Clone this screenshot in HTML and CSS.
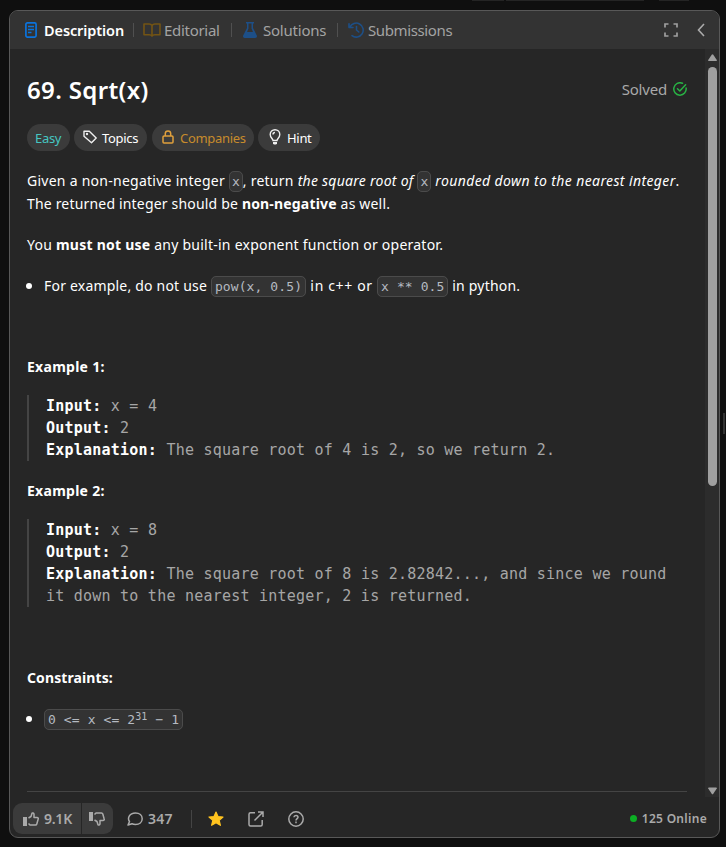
FILE: index.html
```html
<!DOCTYPE html>
<html lang="en">
<head>
<meta charset="utf-8">
<title>69. Sqrt(x)</title>
<link rel="stylesheet" href="styles.css">
</head>
<body>
<div class="top-edge"><i></i><i></i><i></i></div>
<div class="side-handle"></div>
<main class="panel">
  <header class="tabs">
    <div class="tab active">
      <svg class="doc" width="12" height="16" viewBox="0 0 12 16" fill="none" stroke="#0b73dc" stroke-width="1.700"><rect x=".9" y=".9" width="10.200" height="14.200" rx="1.500"/><path d="M3 4.500h6M3 7.500h6M3 10.500h3.500" stroke-width="1.300"/></svg>
      <span class="t-desc">Description</span>
    </div>
    <b class="sep s1"></b>
    <div class="tab">
      <svg class="book" width="18" height="14" viewBox="0 0 18 14" fill="none" stroke="#735414" stroke-width="1.600" stroke-linejoin="round"><path d="M9 2.500C8.300 1.500 7.400 1 6 1H1v10.700h5.200c1.400 0 2.300.4 2.800 1.300.5-.9 1.400-1.300 2.800-1.300H17V1h-5c-1.400 0-2.300.5-3 1.500zM9 2.500V13"/></svg>
      <span class="t-edit">Editorial</span>
    </div>
    <b class="sep s2"></b>
    <div class="tab">
      <svg class="flask" width="14" height="16" viewBox="0 0 14 16"><path d="M3 0h8v1.500h-1V6l3.700 7.200c.7 1.400 0 2.800-1.500 2.800H1.800C.3 16-.4 14.600.3 13.200L4 6V1.500H3z" fill="#1d4f87"/><path d="M5.500 1.500h3v5L10 10H4l1.500-3.500z" fill="#333"/></svg>
      <span class="t-sol">Solutions</span>
    </div>
    <b class="sep s3"></b>
    <div class="tab">
      <svg class="history" width="16" height="16" viewBox="0 0 16 16" fill="none" stroke="#1d4f87" stroke-width="1.600" stroke-linecap="round" stroke-linejoin="round"><path d="M1.800 5.200A7 7 0 1 1 4 13.700M1 1.800v3.700h4M8.500 4.500V8l2.300 2"/></svg>
      <span class="t-sub">Submissions</span>
    </div>
    <svg class="expand" width="14" height="14" viewBox="0 0 14 14" fill="none" stroke="#a0a0a0" stroke-width="1.700"><path d="M1 4.500V1h3.500M9.500 1H13v3.500M13 9.500V13H9.500M4.500 13H1V9.500"/></svg>
    <svg class="chev" width="8" height="14" viewBox="0 0 8 14" fill="none" stroke="#aaa" stroke-width="1.600"><path d="M7 1 1.500 7 7 13"/></svg>
  </header>

  <div class="body">
    <article class="content">
      <div class="title-row">
        <h1>69. Sqrt(x)</h1>
        <div class="solved"><span>Solved</span><svg width="14" height="14" viewBox="0 0 14 14" fill="none" stroke="#28b244" stroke-width="1.500" stroke-linecap="round" stroke-linejoin="round"><path d="M9.500 1.300A6.200 6.200 0 1 0 13.100 6M4.500 6.800 6.800 9 12.600 2.800"/></svg></div>
      </div>
      <div class="chips">
        <span class="chip easy"><span>Easy</span></span>
        <span class="chip topics"><svg width="14" height="14" viewBox="0 0 14 14" fill="none" stroke="#eee" stroke-width="1.400" stroke-linejoin="round"><path d="M1 1.200h5.300L13.200 8 8.500 12.800 1 6.200z"/><circle cx="4" cy="4" r=".5"/></svg><span>Topics</span></span>
        <span class="chip companies"><svg width="12" height="14" viewBox="0 0 12 14" fill="none" stroke="#e0a03c" stroke-width="1.500"><rect x="1" y="6" width="10" height="7" rx="1"/><path d="M3.300 6V3.600a2.700 2.700 0 0 1 5.400 0V6"/></svg><span>Companies</span></span>
        <span class="chip hint"><svg width="12" height="16" viewBox="0 0 12 16" fill="none" stroke="#eee" stroke-width="1.400"><path d="M4 11.500c0-1.700-2.800-2.700-2.800-6a4.800 4.800 0 0 1 9.600 0c0 3.300-2.800 4.300-2.800 6zM6 3.500c-1.200 0-2 .8-2 2"/><path d="M4 13h4v1.200L7.200 15.500H4.800L4 14.200z" fill="#eee" stroke="none"/></svg><span>Hint</span></span>
      </div>

      <p class="intro"><span class="l1a">Given a non-negative integer </span><code class="x">x</code><span class="l1b">, return <em>the square root of </em></span><code class="x">x</code><em class="l1c"> rounded down to the nearest integer</em>.<br><span class="l2">The returned integer should be <strong>non-negative</strong> as well.</span></p>
      <p class="must">You <strong>must not use</strong> any built-in exponent function or operator.</p>
      <ul class="rule"><li><span>For example, do not use </span><code>pow(x, 0.5)</code><span class="cpp"> in c++ or </span><code>x ** 0.5</code><span> in python.</span></li></ul>

      <h2 class="ex1">Example 1:</h2>
      <pre><strong>Input:</strong> x = 4
<strong>Output:</strong> 2
<strong>Explanation:</strong> The square root of 4 is 2, so we return 2.</pre>
      <h2 class="ex2">Example 2:</h2>
      <pre class="second"><strong>Input:</strong> x = 8
<strong>Output:</strong> 2
<strong>Explanation:</strong> The square root of 8 is 2.82842..., and since we round
it down to the nearest integer, 2 is returned.</pre>
      <h2 class="con">Constraints:</h2>
      <ul class="limits"><li><code>0 &lt;= x &lt;= 2<sup>31</sup> − 1</code></li></ul>
      <hr>
    </article>
    <div class="scrollbar">
      <svg width="9" height="8" viewBox="0 0 9 8"><path d="M3.700.8q.8-1 1.600 0L8.800 6q.5 1-.6 1H.8Q-.3 7 .2 6z" fill="#9f9f9f"/></svg>
      <div class="thumb"></div>
      <svg class="down" width="9" height="8" viewBox="0 0 9 8"><path d="M3.700 6.700q.8 1 1.600 0L8.800 1.500q.5-1-.6-1H.8q-1.100 0-.6 1z" fill="#9f9f9f"/></svg>
    </div>
  </div>

  <footer class="footer">
    <div class="vote up"><svg width="16" height="14" viewBox="0 0 16 14" fill="none" stroke="#aaa" stroke-width="1.500" stroke-linejoin="round"><path d="M0 5h4v9H0z" fill="#aaa" stroke="none"/><path d="M5.500 6 8 4.500 9 1.300c.3-.8 2-.3 2 1V5.500h3c1 0 1.500.7 1.200 1.500l-1.400 5c-.2.700-.6 1-1.300 1H7L5.500 11.500"/></svg><span>9.1K</span></div>
    <div class="vote dn"><svg width="16" height="14" viewBox="0 0 16 14" fill="none" stroke="#aaa" stroke-width="1.500" stroke-linejoin="round"><path d="M0 0h4v9H0z" fill="#aaa" stroke="none"/><path d="M5.500 8 8 9.500 9 12.700c.3.800 2 .3 2-1V8.500h3c1 0 1.500-.7 1.200-1.500l-1.400-5c-.2-.7-.6-1-1.300-1H7L5.500 2.500"/></svg></div>
    <div class="comments"><svg width="16" height="14" viewBox="0 0 16 14" fill="none" stroke="#aaa" stroke-width="1.500" stroke-linejoin="round"><path d="M1 13l1.500-3.500C.3 6.500 2 1 8.500 1c4 0 6.700 2.500 6.700 5.800 0 3.400-2.800 5.700-6.700 5.700-1.400 0-2.600-.3-3.500-.8z"/></svg><span>347</span></div>
    <b class="foot-sep"></b>
    <svg class="star" width="16" height="16" viewBox="0 0 16 16"><path d="m8 1 2 4.600 5 .4-3.800 3.300 1.200 5L8 11.700l-4.400 2.600 1.200-5L1 6l5-.4z" fill="#ffc31f" stroke="#ffc31f" stroke-width="1.200" stroke-linejoin="round"/></svg>
    <svg class="share" width="16" height="16" viewBox="0 0 16 16" fill="none" stroke="#aaa" stroke-width="1.500"><path d="M7 1.800H2.500Q1 1.800 1 3.300v10.200Q1 15 2.500 15h10.200q1.500 0 1.500-1.500V9M10 1h5v5M15 1 6.500 9.500"/></svg>
    <svg class="help" width="16" height="16" viewBox="0 0 16 16" fill="none" stroke="#aaa" stroke-width="1.500"><circle cx="8" cy="8" r="7.200"/><path d="M5.900 6.300C6.100 3.800 10 4 10 6.200 10 7.600 8 7.700 8 9.500"/><path d="M8 10.600v1.600"/></svg>
    <div class="online"><i></i><span>125 Online</span></div>
  </footer>
</main>
</body>
</html>
```

FILE: styles.css
```css
* { box-sizing: border-box; }
html, body { height: 100%; }
body { margin: 0; padding: 10px 7px 9px 9px; background: #0f0f0f; color: #fff; font-family: "Noto Sans", sans-serif; font-size: 14px; overflow: hidden; }
svg { display: block; flex: none; }
.top-edge { position: absolute; left: 472px; top: 0; display: flex; gap: 2px; }
.top-edge i { width: 32px; height: 1px; background: #242424; }
.top-edge i:nth-child(2) { width: 138px; }
.top-edge i:nth-child(3) { width: 30px; margin-left: 13px; }
.side-handle { position: absolute; left: 723px; top: 413px; width: 2px; height: 21px; background: #333; }
.panel { height: 828px; width: 711px; display: flex; flex-direction: column; border: 1px solid #585858; border-radius: 9px; background: #262626; overflow: hidden; }

.tabs { flex: none; height: 38px; background: #333; display: flex; align-items: center; color: #a3a3a3; font-size: 15px; white-space: nowrap; }
.tab { display: flex; align-items: center; line-height: 20px; }
.doc { margin: 0 7px 0 15px; }
.t-desc { width: 89px; color: #fff; font-weight: 600; font-size: 14.500px; letter-spacing: -.1px; }
.book { margin-right: 3px; }
.t-edit { width: 67px; letter-spacing: -.3px; }
.sep { width: 1px; height: 14px; background: #505050; }
.s1 { margin-right: 9px; }
.s2 { margin-right: 11px; }
.flask { margin-right: 6px; }
.t-sol { width: 74px; letter-spacing: -.22px; }
.s3 { margin-right: 10px; }
.history { margin-right: 4px; }
.t-sub { width: 96px; letter-spacing: -.38px; }
.expand { margin-left: 200px; }
.chev { margin-left: 19px; }

.body { height: 748px; flex: none; display: flex; }
.content { width: 695px; padding: 25px 18px 0 17px; overflow: hidden; }
.title-row { height: 32px; display: flex; justify-content: space-between; align-items: center; }
h1 { margin: 0; font-size: 24px; line-height: 32px; font-weight: 600; letter-spacing: .35px; white-space: nowrap; }
.solved { display: flex; align-items: center; gap: 6px; margin-top: -2px; color: #a9a9a9; font-size: 15px; letter-spacing: -.2px; }
.chips { margin-top: 18px; display: flex; gap: 5px; font-size: 13px; letter-spacing: -.3px; white-space: nowrap; }
.chip { height: 27px; border-radius: 14px; background: #3b3b3b; display: flex; align-items: center; padding-top: 1px; }
.chip svg { margin-top: -2px; }
.easy { width: 43px; padding-left: 8px; margin-right: -1px; color: #46c6c2; }
.topics { width: 73px; padding-left: 9px; gap: 5px; }
.companies { width: 102px; padding-left: 10px; gap: 6px; margin-right: -1px; color: #c78b2c; letter-spacing: -.3px; }
.hint { width: 62px; padding-left: 11px; gap: 6px; }
p { margin: 0; line-height: 23px; white-space: nowrap; letter-spacing: .24px; }
.l1a, .l1b { letter-spacing: .26px; }
.l1c { letter-spacing: .38px; }
.l2 { letter-spacing: .18px; }
.intro { margin-top: 18px; }
.must { margin-top: 18px; }
code { font: 13px/18px "DejaVu Sans Mono", monospace; letter-spacing: .1px; color: #b5bac1; background: #333; border: 1px solid #4b4b4b; border-radius: 5px; padding: 2px 3px; white-space: pre; }
code.x { padding: 2px; letter-spacing: 0; }
ul { margin: 18px 0 0 -1px; padding: 0 0 0 18px; line-height: 23px; list-style: none; letter-spacing: .2px; white-space: nowrap; }
.cpp { letter-spacing: .65px; }
li { display: block; }
li::before { content: ""; display: inline-block; width: 6px; height: 6px; border-radius: 50%; background: #fff; margin: 0 12px 2px -18px; }
h2 { margin: 0; font-size: 14px; font-weight: 700; line-height: 22px; letter-spacing: .27px; }
.ex1 { margin-top: 59px; }
.ex2 { margin-top: 19px; }
.con { margin-top: 60px; letter-spacing: .1px; }
pre { margin: 17px 0 0; padding-left: 17px; border-left: 2px solid #444; font: 15px/22px "DejaVu Sans Mono", monospace; letter-spacing: .23px; color: #a6a6a6; white-space: pre; }
pre strong { color: #fff; }
.limits { margin-top: 18px; }
sup { font-size: 10px; line-height: 0; vertical-align: 4px; }
hr { height: 1px; border: 0; background: #444; margin: 61px 0 0; }
.scrollbar { width: 14px; background: #2c2c2c; padding: 5px 2px 2px 3px; display: flex; flex-direction: column; }
.thumb { width: 9px; height: 419px; margin-top: 5px; border-radius: 5px; background: #9f9f9f; }
.down { margin-top: auto; }

.footer { height: 40px; padding: 6px 12px 3px 3px; display: flex; align-items: center; color: #aaa; font-weight: 600; }
.vote { height: 31px; background: #3b3b3b; display: flex; align-items: center; }
.up { width: 68px; border-radius: 9px 0 0 9px; padding-left: 10px; gap: 5px; letter-spacing: -.25px; }
.dn { width: 31px; border-radius: 0 9px 9px 0; margin-left: 1px; padding-left: 7px; }
.comments { width: 64px; margin-left: 14px; display: flex; align-items: center; gap: 5px; letter-spacing: .2px; }
.foot-sep { width: 1px; height: 18px; background: #444; }
.star { margin-left: 16px; }
.share, .help { margin-left: 24px; }
.online { margin-left: auto; display: flex; align-items: center; gap: 5px; font-size: 12px; letter-spacing: .3px; }
.online i { width: 7px; height: 7px; border-radius: 50%; background: #0caf24; }
```
